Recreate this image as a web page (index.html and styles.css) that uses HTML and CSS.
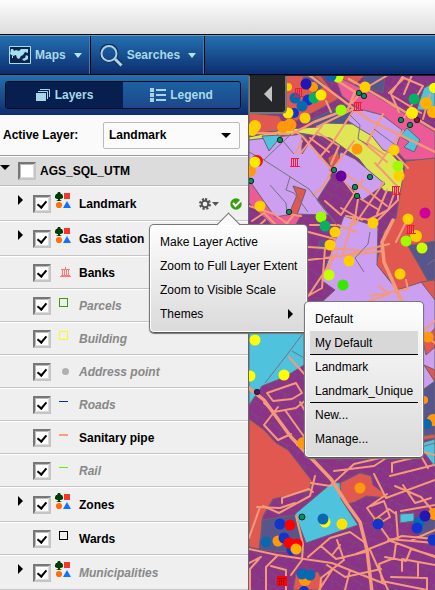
FILE: index.html
```html
<!DOCTYPE html>
<html lang="en">
<head>
<meta charset="utf-8">
<title>Map layers</title>
<link rel="stylesheet" href="styles.css">
</head>
<body>
<svg class="defs" aria-hidden="true">
  <symbol id="theme" viewBox="0 0 17 17">
    <path fill="#033c03" d="M3 0h2l1 2h1l1 2v2l-2 1H5v1l2 1H1l2-1V7H2L0 6V4l1-2h1z"/>
    <path fill="#f5372b" d="M9 1h6v6H9z"/><circle cx="4" cy="13" r="3.1" fill="#ff6f0d"/><path fill="#1272ff" d="M12 9l4 7H8z"/>
  </symbol>
  <symbol id="bank" viewBox="0 0 11 11"><path fill="none" stroke="#f77" d="M1 2.500h9M5.500 0v2M0 9.500h11M1 8.500h9M2.500 3v5M4.500 3v5M6.500 3v5M8.500 3v5"/></symbol>
  <symbol id="mbank" viewBox="0 0 10 9"><path fill="none" stroke="#f5183d" d="M1.500 1v7M3.500 1v7M5.500 1v7M7.500 1v7M0 8.500h10M1 .5h8"/></symbol>
</svg>
<div class="app">
  <header class="banner"></header>
  <nav class="toolbar">
    <button class="tool" type="button">
      <svg width="22" height="18" viewBox="0 0 22 18"><path fill="#0c2550" stroke="#a8ddec" d="M.5.500h21v17H.5z"/><path fill="#a8ddec" d="M2 3h2l1 2 2-1 3 1 2-2h7v4l-3-1-2 3-2 1-2 3-2-1-1-3-3 1-3-2zM13 13l3-1 1-3 2 1v3l-4 2zM3 10h1v2H3z"/></svg>
      <span>Maps</span><i class="caret"></i>
    </button>
    <button class="tool tool-search" type="button">
      <svg width="23" height="23" viewBox="0 0 23 23" fill="none"><path stroke="#13284f" stroke-width="5" d="M15 15l6 6"/><circle cx="9" cy="9" r="8" stroke="#13284f" stroke-width="3"/><circle cx="9" cy="9.500" r="7.500" stroke="#a8d4e8" stroke-width="2"/><path stroke="#a8d4e8" stroke-width="3" d="M15 15l6.500 6.500"/></svg>
      <span>Searches</span><i class="caret"></i>
    </button>
  </nav>
  <main class="main">
    <aside class="panel">
      <div class="tabs-bar"><div class="tabs">
        <button class="tab active" type="button"><svg width="15" height="13" viewBox="0 0 15 13"><path fill="#a8d4e8" d="M0 4h10v8H0z"/><path fill="none" stroke="#a8d4e8" d="M2 2.500h9.500V10M4 .5h9.500V8"/></svg>Layers</button>
        <button class="tab" type="button"><svg width="16" height="14" viewBox="0 0 16 14"><path fill="#a8d4e8" d="M0 0h4v4H0zM0 5h4v4H0zM0 10h4v4H0zM6 1h10v2H6zM6 6h10v2H6zM6 11h10v2H6z"/></svg>Legend</button>
      </div></div>
      <div class="active-layer">
        <label for="layer">Active Layer:</label>
        <div class="select"><select id="layer"><option>Landmark</option></select></div>
      </div>
      <div class="root"><i class="down"></i><input type="checkbox" id="root"><label for="root">AGS_SQL_UTM</label></div>
      <ul class="layers">
        <li class="row tall"><i class="right"></i><input type="checkbox" id="l1" checked><svg class="theme"><use href="#theme"/></svg><label for="l1">Landmark</label>
          <button class="gear" type="button" aria-label="Layer options"><svg width="20" height="12" viewBox="0 0 20 12"><path fill="none" stroke="#555" stroke-width="3" stroke-dasharray="2 1.530" d="M6 1.500a4.500 4.500 0 1 1 0 9a4.500 4.500 0 1 1 0-9"/><circle cx="6" cy="6" r="3.300" fill="none" stroke="#555" stroke-width="2"/><path fill="#555" d="M13 4h7l-3.500 4z"/></svg></button>
          <svg class="ok" width="12" height="12" viewBox="0 0 12 12"><circle cx="6" cy="6" r="5.700" fill="#36a00c"/><path fill="none" stroke="#fff" stroke-width="2" d="M3 5l2.500 3L11 2.500"/></svg>
          <ul class="menu">
            <li><a href="#">Make Layer Active</a></li>
            <li><a href="#">Zoom to Full Layer Extent</a></li>
            <li><a href="#">Zoom to Visible Scale</a></li>
            <li class="themes"><a href="#">Themes<i class="right"></i></a>
              <ul class="menu submenu">
                <li><a href="#">Default</a></li>
                <li class="sel line"><a href="#">My Default</a></li>
                <li><a href="#">Landmark</a></li>
                <li class="line"><a href="#">Landmark_Unique</a></li>
                <li><a href="#">New...</a></li>
                <li><a href="#">Manage...</a></li>
              </ul>
            </li>
          </ul>
        </li>
        <li class="row tall"><i class="right"></i><input type="checkbox" id="l2" checked><svg class="theme"><use href="#theme"/></svg><label for="l2">Gas station</label></li>
        <li class="row"><input type="checkbox" id="l3" checked><svg class="bank"><use href="#bank"/></svg><label for="l3">Banks</label></li>
        <li class="row off"><input type="checkbox" id="l4" checked><i class="box green"></i><label for="l4">Parcels</label></li>
        <li class="row off"><input type="checkbox" id="l5" checked><i class="box yellow"></i><label for="l5">Building</label></li>
        <li class="row off"><input type="checkbox" id="l6" checked><i class="dot"></i><label for="l6">Address point</label></li>
        <li class="row off"><input type="checkbox" id="l7" checked><i class="dash blue"></i><label for="l7">Roads</label></li>
        <li class="row"><input type="checkbox" id="l8" checked><i class="dash salmon"></i><label for="l8">Sanitary pipe</label></li>
        <li class="row off"><input type="checkbox" id="l9" checked><i class="dash lime"></i><label for="l9">Rail</label></li>
        <li class="row tall"><i class="right"></i><input type="checkbox" id="l10" checked><svg class="theme"><use href="#theme"/></svg><label for="l10">Zones</label></li>
        <li class="row"><input type="checkbox" id="l11" checked><i class="box black"></i><label for="l11">Wards</label></li>
        <li class="row tall off"><i class="right"></i><input type="checkbox" id="l12" checked><svg class="theme"><use href="#theme"/></svg><label for="l12">Municipalities</label></li>
      </ul>
    </aside>
    <section class="map">
      <svg class="canvas" viewBox="249 76 186 514" preserveAspectRatio="xMinYMin slice">
        <defs><pattern id="lots" width="13" height="11" patternUnits="userSpaceOnUse" patternTransform="rotate(28)"><path fill="none" stroke="#76566f" stroke-width=".7" d="M0 5h8v6M8 5l5-2"/></pattern></defs>
        <path fill="#8b3289" d="M249 75h186v515H249z"/><path fill="url(#lots)" d="M249 75h186v515H249z"/>
        <g stroke="#6c606c" stroke-width="1">
          <path fill="#e05850" d="M286 75h34l18 24-22 12-20 10-10-7zM335 75h30l-14 14zM249 113l30 3 8 14-38 4z"/>
          <path fill="#56568c" d="M308 121l39-18 8 9-14 18-26-5zM365 75h20l-2 18-20-7zM303 77h12l10 8-10 8-12-6z"/>
          <path fill="#ec5a98" d="M334 75l39 19 62 38v28h-30l-45-50-18-14zM249 174l30 38 23 2-10 17-18-4-25-24z"/>
          <path fill="#dfe655" d="M249 137l38-8 31-2 7-4 28 1 20 10 27 29 6 12-6 18-16-2-25-32-29-21-31-5-50 8z"/>
          <path fill="#cc9ff0" d="M249 140l54-6 27 34 1 10-14 22 12 15-36-1-18 3-26-37zM347 120l9-12 26 7 20 15-8 24-11-4-11-14-15-9zM331 169l10-17 14 7 30 25-22 16z"/>
          <path fill="#8b3289" d="M302 154l13-20 21 17-8 13-26-30z"/>
          <path fill="#4fc3de" d="M262 136l20-1-13 16zM400 136l7-8 13 12-6 12-10-5 5-5zM419 102l5-14 11-6v28h-18z"/>
          <path fill="#e05850" d="M406 161l29-3v84l-24 3 17 36-28 10-24-26 8-34 12-13 4-25zM293 186l13 4-9 25-8-1 8-19z M328 158l10-7 2 8-9 10z"/>
          <path fill="#56568c" d="M408 246l27-5v38l-7 2zM319 241h9v8h-9z"/>
          <path fill="#cc9ff0" d="M344 216l34 11-1 38 20 25 25-8 13 15v91l-18 5-95-91 13-12-14-10z"/>
          <path fill="#e05850" d="M421 282l14-2v20zM435 328l-12 14 3 13 9-8zM424 365l11 5v12z"/>
          <path fill="#56568c" d="M417 394l18-13v54l-18 2z"/><path fill="#e05850" d="M417 437l18-3v4l-18 3z"/>
          <path fill="#4fc3de" d="M418 444l17-5v28zM249 332h55v33l-19 12-23 9-13 19z"/>
          <path fill="#e05850" d="M249 419l15 11 12 13 12 7 24 31-3 10-36 8-10 17-4 33-10-2zM340 483l20-10 11 3 2 9 17 13-24-2-11 6-15 4zM296 574l22-2 6 12-5 6h-26z"/>
          <path fill="#56568c" d="M262 520l33-5 9 38-43-3zM412 521l23-7v18l-13 6z"/>
          <path fill="#4fc3de" d="M295 514l38-32 7 1 1 16 17 26-52 18zM400 514l14-1v8l-14 2z"/>
        </g>
        <g fill="none" stroke="#f49a78" stroke-width="2" stroke-linejoin="round" stroke-linecap="round">
          <path stroke-width="2.500" d="M309 75l60 45 66 32M349 79l33 19 53 32M330 76l25 16-7 17-34 13-22 12-43-1"/>
          <path d="M317 127l14-7 24-12M355 108l-22 34-14 16M331 112l-5-11"/>
          <path d="M388 75l-24 14-12 14M403 76l-12 18 8 18M389 93l15-15 19 8-19 32M393 96l28 17M412 75l-8 19M382 98l13 9M423 119l7-25M383 114l-16 29 18 12M403 131l-26 35M395 154l13 14M363 142l24 20M375 163l22 23-9 24-20 10"/>
          <path d="M283 124l19 12 30 34 22-29M332 170l-10 18-10 8M300 154l22-28M310 138l19 14M317 132l22 14-8 18M296 153l6-12M338 173l20 26-4 26M343 172l44 34M363 180l-22 35-16-14M384 182l-29 42M387 190l-10 24M361 199l18 11M341 208l21 12M346 216l30 5"/>
          <path d="M249 206l25 8 14 10M252 221l12-8 12 12M288 214l13 2M293 216l-7 8M249 235l16-15M378 220l20-20v-12M301 230l34 9-8 40M310 225h28l18 7M308 247l50 3M308 260l75-9M325 248l-3 40-14 8M337 253l-28 42M353 218l-11 38 47-12M370 296l38-7-2-9M379 286l10 8-34 12M435 321l-14 12 14 10M407 220l-11 22"/>
          <path stroke-width="3.500" d="M393 220l-11 22 2 20 17 38M249 388l15 12 27 37 40 42 16 25 13 18 7 28 6 50"/>
          <path d="M289 357l18 20M267 393l29-10 6 10-10 6-19 2zM264 403l10 9 22-4 15-12M285 410l20 28-8 7M278 407l-14 18 14 15 13-6M300 402l10 18M303 435l20 15 62-18M311 450l20-16 37 4M340 456l42-19"/>
          <path d="M311 483l19 3 24-22 61-14 20 5M315 476l-5 20-31 17-16-7M282 503v-5l27-9 4 3M334 471l40-5 20-13M374 474l12 24 49-18M387 494l-20 14 22 31 46 4M390 476l44-11M392 472v-9l29-7 7 12M403 485l12 18 16-5M395 486l26 11 11 13M371 506l13-5 6 16-15 9M401 511l34-6M377 518l12-9 7 5M396 512l2 27"/>
          <path d="M249 549l28 6 27 4 28 4 53 21M249 538l11-31M257 507l23 1 15-5M296 516l7 28-1 16-11 15M259 559l-9 10v21M278 555l-12 12v23M249 563l12-6M271 566l15 4v20M308 557l22-19 20-6 14 10M337 540l7 20-23 18-1 12M321 546l15 13 29-7M333 554l7-9M327 565l18 12 36-8M332 570l-13 20M350 570l-5 20"/>
          <path d="M356 554l46-18 33 3M370 550l18 40M396 543l-2 15-15 6 3 17 45 9M388 540l47 17M385 557l21 4 5-12 24 7M402 571v-12l33 6M418 562v14M391 577l36 1v12M435 530l-23 10"/>
        </g>
        <path fill="none" stroke="#77717d" d="M249 152l15 8 45 29 28 36M264 160l27-26M290 177l-4 13 8 3 14 19M270 185l16 18 1 10M277 134l17 20M350 115l10 10-2 14 10 6M374 129l24 18M370 232l-2 12-13 14 9 14M304 332l-18 24-21 27M304 358l-12-7M427 265l8-6M418 448l17-5"/>
        <g stroke="#18261d" stroke-width="1" fill="#078d65"><circle cx="359" cy="93" r="2.700"/><circle cx="364" cy="96" r="2.700"/><circle cx="401" cy="120" r="2.700"/><circle cx="410" cy="125" r="2.700"/><circle cx="280" cy="140" r="2.700"/><circle cx="334" cy="170" r="2.700"/><circle cx="370" cy="177" r="2.700"/><circle cx="355" cy="187" r="2.700"/><circle cx="357" cy="196" r="2.700"/><circle cx="289" cy="212" r="2.700"/><circle cx="251" cy="181" r="2.700"/><circle cx="302" cy="517" r="3"/><circle cx="257" cy="392" r="2.700" fill="#4b147d"/><circle cx="417" cy="120" r="2.700" fill="#a0103e"/></g>
        <g fill="#ffd000"><circle cx="365" cy="87" r="5.500"/><circle cx="288" cy="87" r="4"/><circle cx="305" cy="118" r="5.500"/><circle cx="394" cy="150" r="5.500"/><circle cx="399" cy="176" r="5.500"/><circle cx="260" cy="206" r="5.500"/><circle cx="373" cy="223" r="5.500"/><circle cx="408" cy="219" r="5.500"/><circle cx="416" cy="236" r="6"/><circle cx="335" cy="232" r="5.500"/><circle cx="330" cy="245" r="5.500"/><circle cx="349" cy="261" r="5.500"/><circle cx="400" cy="274" r="5.500"/><circle cx="412" cy="113" r="6" fill="#fe0"/><circle cx="434" cy="88" r="5" fill="#ff0"/><circle cx="426" cy="103" r="6" fill="#ffb000"/><circle cx="433" cy="112" r="6" fill="#ffb000"/><circle cx="252" cy="130" r="6"/><circle cx="255" cy="126" r="6"/></g>
        <g fill="#ff980b"><circle cx="357" cy="149" r="5.500"/><circle cx="283" cy="127" r="6"/><circle cx="290" cy="125" r="6.500"/><circle cx="313" cy="87" r="5"/><circle cx="315" cy="98" r="5"/><circle cx="250" cy="171" r="6"/><circle cx="303" cy="443" r="6"/><circle cx="360" cy="488" r="5.500"/><circle cx="428" cy="337" r="5.500"/><circle cx="433" cy="420" r="6"/><circle cx="424" cy="400" r="4"/><circle cx="278" cy="541" r="5.500"/><circle cx="305" cy="580" r="6"/><circle cx="434" cy="514" r="6"/><circle cx="378" cy="522" r="5"/></g>
        <g fill="#ff0"><circle cx="255" cy="340" r="5.500"/><circle cx="250" cy="376" r="5.500"/><circle cx="284" cy="375" r="5.500"/><circle cx="325" cy="522" r="5.500"/><circle cx="342" cy="524" r="5.500" fill="#ffe200"/></g>
        <g fill="#a0fa00"><circle cx="338" cy="77" r="5.500" fill="#c8ff00"/><circle cx="341" cy="110" r="5.500"/><circle cx="398" cy="166" r="5.500"/><circle cx="321" cy="217" r="5.500"/><circle cx="406" cy="241" r="5.500"/><circle cx="422" cy="248" r="5.500" fill="#c6ff00"/><circle cx="329" cy="275" r="5.500" fill="#c6ff00"/><circle cx="343" cy="285" r="5.500" fill="#37e800"/></g>
        <g fill="#0868b2"><circle cx="295" cy="98" r="5.500"/><circle cx="331" cy="76" r="5.500"/><circle cx="323" cy="519" r="5.500"/><circle cx="266" cy="542" r="5.500"/><circle cx="302" cy="574" r="5.500"/><circle cx="310" cy="575" r="5.500"/><circle cx="419" cy="522" r="5.500"/><circle cx="427" cy="424" r="5"/></g>
        <g fill="#1035cd"><circle cx="306" cy="84" r="5.500" fill="#1e16b5"/><circle cx="308" cy="100" r="5.500"/><circle cx="294" cy="113" r="5"/><circle cx="280" cy="524" r="5.500"/><circle cx="284" cy="538" r="5.500"/><circle cx="292" cy="550" r="5.500"/><circle cx="378" cy="524" r="5.500"/><circle cx="417" cy="528" r="5.500"/><circle cx="425" cy="516" r="5.500" fill="#2517b6"/><circle cx="433" cy="540" r="5.500"/><circle cx="304" cy="591" r="5"/></g>
        <circle cx="302" cy="106" r="5.500" fill="#0868b2"/>
        <g fill="#08b062"><circle cx="414" cy="99" r="5.500"/><circle cx="325" cy="226" r="5.500"/><circle cx="314" cy="98" r="5.500"/></g>
        <g fill="#ffe900"><circle cx="321" cy="95" r="5.500"/><circle cx="288" cy="113" r="5.500"/></g>
        <circle cx="257" cy="161" r="6" fill="#f01018"/><circle cx="255" cy="162" r="5.500" fill="#ffe900"/><circle cx="290" cy="525" r="5.500" fill="#f00"/><circle cx="289" cy="543" r="5.500" fill="#f00"/><circle cx="297" cy="544" r="5.500" fill="#f00"/><circle cx="296" cy="549" r="5.500" fill="#ffb000"/><circle cx="341" cy="176" r="5.500" fill="#65009b"/><circle cx="425" cy="213" r="5.500" fill="#cd009c"/>
        <use href="#mbank" x="353" y="102" width="10" height="9"/><use href="#mbank" x="294" y="88" width="10" height="9"/><use href="#mbank" x="290" y="158" width="10" height="9"/><use href="#mbank" x="391" y="186" width="10" height="9"/><use href="#mbank" x="406" y="225" width="10" height="9"/><path fill="#f00" d="M277 576h10v10h-10z"/><path fill="none" stroke="#960000" d="M278 578.500h8M279.500 580v5M281.500 580v5M283.500 580v5"/>
      </svg>
      <button class="collapse" type="button" aria-label="Hide panel"><i></i></button>
    </section>
  </main>
</div>
</body>
</html>
```
FILE: styles.css
```css
* { box-sizing: border-box; }
body { margin: 0; font: 12px/16px "Liberation Sans", Arial, sans-serif; color: #000; }
button { font: inherit; padding: 0; border: 0; background: none; color: inherit; }
ul { list-style: none; margin: 0; padding: 0; }
a { color: inherit; text-decoration: none; }
.defs { position: absolute; width: 0; height: 0; }
.app { display: flex; flex-direction: column; min-height: 100vh; }
.banner { height: 35px; background: linear-gradient(#fdfdfd, #dcdcdc); border-bottom: 1px solid #000; }
.toolbar { display: flex; height: 40px; border-top: 1px solid #5aa0cc; border-bottom: 1px solid #000; background: linear-gradient(#2370b1, #0d2d6e); }
.tool { display: flex; align-items: center; gap: 4px; padding: 0 8px 0 9px; border-right: 1px solid #000; box-shadow: inset -1px 0 #3f7fb5; color: #a8d9ea; font-weight: bold; }
.tool .caret { margin-left: 4px; }
.caret { border: 4px solid transparent; border-top: 5px solid #b5e3ee; border-bottom: 0; }
.main { display: flex; flex: 1; }
.panel { flex: 0 0 249px; border-right: 1px solid #666; background: #efefef; font-weight: bold; }
.tabs-bar { height: 40px; padding: 6px 7px 6px 5px; background: linear-gradient(#2370b1, #0d2d6e); }
.tabs { display: flex; height: 28px; border: 1px solid #020812; border-radius: 3px; overflow: hidden; }
.tab { flex: 1; display: flex; align-items: center; justify-content: center; gap: 4px; background: linear-gradient(#1d61a2, #1d478a); color: #a8d9ea; font-weight: bold; }
.tab.active { background: #061f4e; }
.active-layer { display: flex; align-items: center; justify-content: space-between; height: 41px; padding: 0 8px 0 3px; background: #fafafa; border-bottom: 1px solid #999; }
.select { position: relative; width: 137px; }
.select select { width: 100%; height: 27px; padding: 0 5px; appearance: none; border: 1px solid #bbb; border-radius: 2px; background: #fbfbfb; font: inherit; color: #000; }
.select::after { content: ""; position: absolute; right: 9px; top: 11px; border: 5px solid transparent; border-top: 5px solid #000; border-bottom: 0; pointer-events: none; }
.root { display: flex; align-items: center; height: 30px; background: #dcdcdc; border-top: 1px solid #fff; border-bottom: 1px solid #bbb; }
.root input { margin: 0 4px 0 8px; }
.down { margin: -8px 0 0; border: 5px solid transparent; border-top: 5px solid #000; border-bottom: 0; }
.right { border: 5px solid transparent; border-left: 5px solid #000; border-right: 0; }
input[type="checkbox"] { flex: none; appearance: none; width: 18px; height: 18px; border: 2px solid; border-color: #777 #c5c5c5 #c5c5c5 #777; background: #fff; box-shadow: inset -1px -1px #ddd, inset 1px 1px #bbb; }
input:checked::after { content: ""; display: block; width: 4px; height: 7px; margin: 2px 0 0 4px; border: solid #000; border-width: 0 2px 2px 0; transform: rotate(40deg); }
.row { position: relative; display: grid; grid-template-columns: 16px 22px 24px 1fr 30px 19px; align-items: center; height: 33px; padding-left: 17px; border-top: 1px solid #fff; border-bottom: 1px solid #c4c4c4; }
.row.tall { height: 35px; }
.row > input { grid-column: 2; margin: 1px 0 0; }
.row > .right { justify-self: start; margin: -8px 0 0 1px; }
.off label { color: #888; font-style: italic; }
.theme { width: 17px; height: 17px; margin-top: -6px; }
.bank { width: 11px; height: 11px; margin-left: 5px; }
.box { width: 9px; height: 9px; margin: -6px 0 0 4px; border: 1px solid; }
.dot { width: 7px; height: 7px; margin-left: 7px; border-radius: 50%; background: #b0b0b0; }
.dash { width: 9px; height: 1px; margin: -6px 0 0 4px; background: currentColor; }
.green { color: #36a00c; } .yellow { color: #fafa1e; } .black { color: #000; }
.blue { color: #0b2f9a; } .salmon { height: 2px; color: #f9a07a; } .lime { color: #5cf500; }
.gear, .gear svg, .ok { display: block; }
.ok { margin-left: 1px; }
.menu { position: absolute; z-index: 2; left: 149px; top: 37px; width: 159px; padding: 5px 5px 6px; border: 1px solid #777; border-bottom-color: #555; border-radius: 5px; background: linear-gradient(#fdfdfd, #dadada); box-shadow: inset 0 0 0 1px #fff, 0 1px 1px #777; font-weight: normal; }
.menu::before { content: ""; position: absolute; left: 70px; top: -9px; width: 16px; height: 16px; border: solid #777; border-width: 1px 0 0 1px; background: linear-gradient(135deg, #fafafa 50%, transparent 50%); transform: rotate(45deg); }
.menu a { display: flex; align-items: center; justify-content: space-between; height: 24px; padding: 0 9px 0 5px; white-space: nowrap; }
.themes { position: relative; }
.submenu { left: 149px; top: -1px; width: 120px; }
.submenu::before { display: none; }
.submenu .sel { background: #d8d8d8; }
.submenu .line { box-shadow: inset 0 -1px #000; }
.map { position: relative; flex: 1; min-width: 0; border-top: 1px solid #0d2448; overflow: hidden; background: #8b3289; }
.canvas { position: absolute; inset: 0; display: block; width: 100%; height: 100%; }
.collapse { position: absolute; left: 0; top: 0; display: grid; place-items: center; width: 38px; height: 38px; border: solid #777; border-width: 0 2px 2px 1px; border-radius: 0 0 5px 0; background: #26272b; }
.collapse i { border: 8px solid transparent; border-right: 8px solid #c4c4c4; border-left: 0; }
```
